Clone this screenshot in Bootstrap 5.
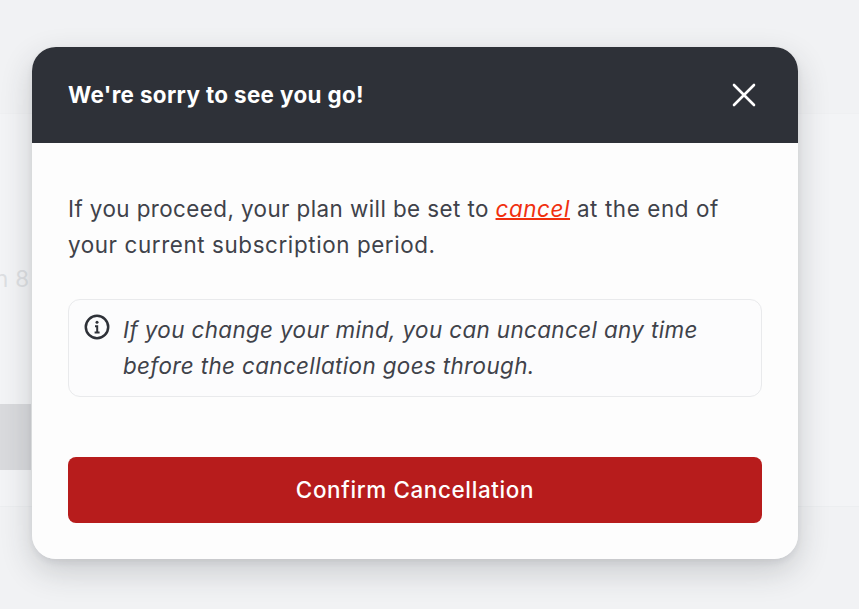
<!DOCTYPE html>
<html lang="en">
<head>
<meta charset="utf-8">
<title>Cancel plan</title>
<link href="https://cdn.jsdelivr.net/npm/bootstrap@5.3.0/dist/css/bootstrap.min.css" rel="stylesheet">
<style>
html, body { height: 100%; }
body { background: #f1f2f4; font-family: "Inter", "Liberation Sans", sans-serif; overflow: hidden; }
.back-page { height: 609px; padding-top: 113px; }
.back-panel { height: 394px; background: #f3f4f6; border-top: 1px solid #eff0f2; border-bottom: 1px solid #eceef0; display: flex; flex-direction: column; }
.back-text { font-size: 22.4px; line-height: 36px; color: #dddfe2; margin-top: 147px; margin-left: -5px; letter-spacing: .4px; }
.back-block { width: 31px; height: 66px; background: #d9dadd; margin-top: 107px; }
.sheet { width: 766px; height: 512px; border: 0; border-radius: 24px; background: #fdfdfd; overflow: hidden; }
.sheet-wrap { position: absolute; left: 32px; top: 47px; width: 766px; height: 512px; border-radius: 24px; box-shadow: 0 3px 6px rgba(40,44,52,.07), 0 12px 32px rgba(40,44,52,.2); }
.sheet-head { height: 96px; background: #2e3138; padding: 0 42px 0 36px; border: 0; border-radius: 0; }
.sheet-title { font-size: 22.4px; font-weight: 700; color: #fff; letter-spacing: .36px; margin: 0; }
.sheet-close { background: none; border: 0; padding: 0; width: 24px; height: 24px; display: flex; }
.sheet-body { padding: 48px 36px 36px; color: #3d4048; }
.lead-copy { font-size: 22.4px; line-height: 36px; margin: 0 0 36px; letter-spacing: .6px; font-weight: 400; color: #3f424a; }
.lead-start { letter-spacing: .42px; }
.lead-copy a { color: #f0300f; font-style: italic; text-decoration-thickness: 2px; }
.note-box { border: 1px solid #e9eaec; border-radius: 12px; padding: 12px 15px; gap: 13px; height: 98px; background: #fcfcfd; margin-bottom: 60px; }
.note-box svg { flex: none; margin-top: 2px; }
.note-copy { font-size: 22.4px; line-height: 36px; font-style: italic; margin: 0; color: #3f424a; letter-spacing: .38px; }
.confirm-btn { height: 66px; background: #b71c1c; border: 0; border-radius: 8px; font-size: 22.4px; font-weight: 500; color: #fff; letter-spacing: .65px; }
.confirm-btn:hover { background: #b71c1c; color: #fff; }
</style>
</head>
<body>
<div class="back-page">
  <div class="back-panel">
    <div class="back-text">n 8</div>
    <div class="back-block"></div>
  </div>
</div>
<div class="sheet-wrap">
<div class="modal-content sheet">
  <div class="modal-header sheet-head d-flex align-items-center justify-content-between">
    <h5 class="sheet-title">We're sorry to see you go!</h5>
    <button type="button" class="sheet-close" aria-label="Close">
      <svg width="24" height="24" viewBox="0 0 24 24" fill="none" stroke="#fff" stroke-width="2.6" stroke-linecap="round"><path d="M2 2 L22 22 M22 2 L2 22"/></svg>
    </button>
  </div>
  <div class="modal-body sheet-body">
    <p class="lead-copy"><span class="lead-start">If you proceed, your plan will be set to </span><a href="#">cancel</a> at the end of your current subscription period.</p>
    <div class="note-box d-flex align-items-start">
      <svg width="26" height="26" viewBox="0 0 26 26" fill="none" stroke="#2e3138" stroke-width="2.5"><circle cx="13" cy="13" r="11.2"/><path d="M11 12.2h2.2v6M10.6 18.4h5" stroke-width="2"/><circle cx="13" cy="8.2" r="1.5" fill="#2e3138" stroke="none"/></svg>
      <p class="note-copy">If you change your mind, you can uncancel any time before the cancellation goes through.</p>
    </div>
    <button type="button" class="btn btn-danger confirm-btn w-100">Confirm Cancellation</button>
  </div>
</div>
</div>
<script src="https://cdn.jsdelivr.net/npm/bootstrap@5.3.0/dist/js/bootstrap.bundle.min.js"></script>
</body>
</html>
